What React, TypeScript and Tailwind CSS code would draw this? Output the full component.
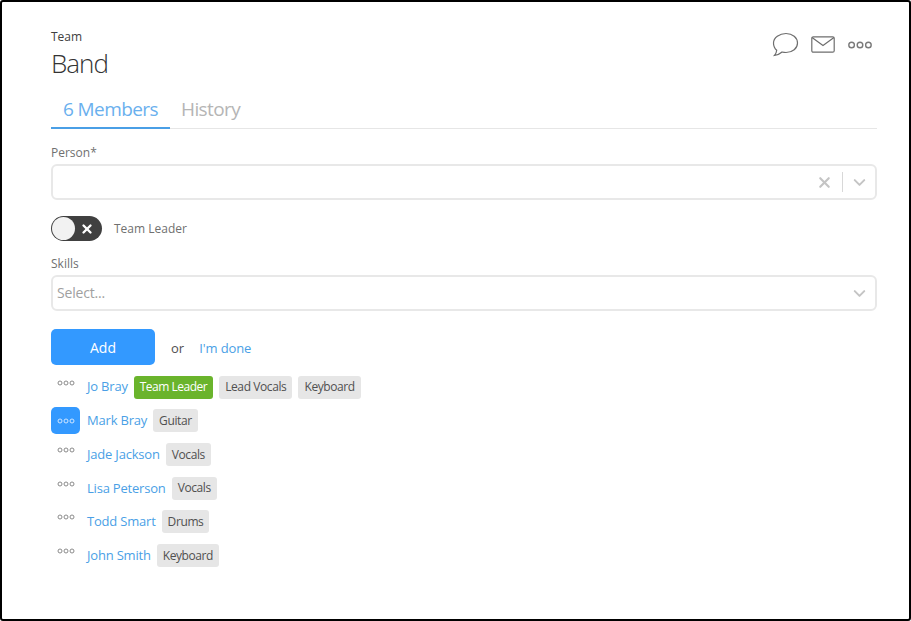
import { X, ChevronDown } from "lucide-react";

const MEMBERS = [
  { name: "Jo Bray", leader: true, skills: ["Lead Vocals", "Keyboard"] },
  { name: "Mark Bray", active: true, skills: ["Guitar"] },
  { name: "Jade Jackson", skills: ["Vocals"] },
  { name: "Lisa Peterson", skills: ["Vocals"] },
  { name: "Todd Smart", skills: ["Drums"] },
  { name: "John Smith", skills: ["Keyboard"] },
];

function Dots({ className }: { className: string }) {
  return (
    <svg width="18" height="6" viewBox="0 0 18 6" fill="none" stroke="currentColor" strokeWidth="1" className={className}>
      <circle cx="3" cy="3" r="2" />
      <circle cx="9" cy="3" r="2" />
      <circle cx="15" cy="3" r="2" />
    </svg>
  );
}

function MemberRow({ member }: { member: (typeof MEMBERS)[number] }) {
  return (
    <div className="flex h-[33.7px] items-center">
      <div className={`mr-[7px] flex h-[27px] w-[29px] justify-center rounded-[5px] ${member.active ? "items-center bg-[#3399ff]" : "bg-white pt-[6px]"}`}>
        <Dots className={member.active ? "text-[#cfe6ff]" : "text-[#8a8a8a]"} />
      </div>
      <span className="mr-[6px] text-[13px] tracking-[-0.2px] text-[#4a9fe6]">{member.name}</span>
      {member.leader && (
        <span className="mr-[6px] flex h-[23px] items-center rounded-[3px] bg-[#6ab42c] px-[6px] text-[12px] tracking-[-0.5px] text-white">Team Leader</span>
      )}
      {member.skills.map((skill) => (
        <span key={skill} className="mr-[6px] flex h-[23px] items-center rounded-[3px] bg-[#e6e6e6] px-[6px] text-[12px] tracking-[-0.4px] text-[#505050]">
          {skill}
        </span>
      ))}
    </div>
  );
}

export default function App() {
  return (
    <div className="h-[621px] w-[911px] overflow-hidden rounded-[3px] border-2 border-black bg-white font-['Open_Sans',sans-serif]">
      <div className="pl-[49px] pr-[32px] pt-[27px]">
        {/* header */}
        <div className="flex items-start justify-between">
          <div>
            <div className="text-[12px] leading-[16px] text-[#404040]">Team</div>
            <div className="mt-[1px] text-[26px] font-light leading-[34px] tracking-[-1px] text-[#333]">Band</div>
          </div>
          <div className="mr-[8px] mt-[3px] flex items-center text-[#6e6e6e]">
            <svg width="27" height="25" viewBox="0 0 27 25" fill="none" stroke="currentColor" strokeWidth="1.2">
              <path d="M14 1.5c6.500 0 11.500 4 11.500 9.500 0 5.500-5 9.500-11.500 9.500-1.400 0-2.700-.2-3.900-.5C8.500 21.500 6 22.800 2.500 23.300c1.300-1.300 2-3 2.200-5C2.600 16.500 1.500 14 1.500 11 1.500 5.500 7.500 1.500 14 1.500z" />
            </svg>
            <svg width="24" height="17" viewBox="0 0 24 17" fill="none" stroke="currentColor" strokeWidth="1.2" className="ml-[12px]">
              <rect x="0.8" y="0.8" width="22.400" height="15.400" rx="1.500" />
              <path d="M1 1.500l11 8 11-8" />
            </svg>
            <Dots className="ml-[16px] scale-x-[1.4] scale-y-[1.4] text-[#7a7a7a]" />
          </div>
        </div>

        {/* tabs */}
        <div className="mt-[12px] flex h-[37px] border-b border-[#e6e6e6] text-[19px] leading-[34px] tracking-[-0.6px]">
          <div className="h-[37px] w-[119px] border-b-2 border-[#4a9fe6] pl-[12px] text-[#6ab0ee]">6 Members</div>
          <div className="pl-[11px] text-[#b5b5b5]">History</div>
        </div>

        {/* person */}
        <div className="mt-[15px] text-[12px] leading-[17px] text-[#707070]">Person*</div>
        <div className="mt-[3px] flex h-[36px] items-center justify-end rounded-[6px] border-2 border-[#e8e8e8]">
          <X size={17} strokeWidth={3} className="text-[#c4c4c4]" />
          <div className="ml-[9px] mr-[7px] h-[20px] w-px bg-[#d8d8d8]" />
          <ChevronDown size={19} strokeWidth={2.5} className="mr-[6px] text-[#c4c4c4]" />
        </div>

        {/* toggle */}
        <div className="mt-[16px] flex h-[25px] items-center">
          <div className="flex h-[25px] w-[51px] items-center rounded-full bg-[#404040] pl-px">
            <div className="h-[23px] w-[23px] rounded-full bg-[#f2f2f2]" />
            <X size={14} strokeWidth={4} className="ml-[5px] text-white" />
          </div>
          <span className="ml-[12px] text-[12px] text-[#707070]">Team Leader</span>
        </div>

        {/* skills */}
        <div className="mt-[14px] text-[12px] leading-[17px] text-[#707070]">Skills</div>
        <div className="mt-[3px] flex h-[36px] items-center justify-between rounded-[6px] border-2 border-[#e8e8e8] pl-[4px]">
          <span className="pb-[2px] text-[14px] tracking-[-0.2px] text-[#a0a0a0]">Select...</span>
          <ChevronDown size={19} strokeWidth={2.5} className="mr-[6px] text-[#c4c4c4]" />
        </div>

        {/* actions */}
        <div className="mt-[18px] flex items-center">
          <button className="h-[36px] w-[104px] rounded-[5px] bg-[#3399ff] text-[14px] text-white">Add</button>
          <span className="ml-[16px] pt-[3px] text-[13px] text-[#505050]">or</span>
          <span className="ml-[15px] pt-[3px] text-[13px] tracking-[-0.1px] text-[#4a9fe6]">I'm done</span>
        </div>

        {/* members */}
        <div className="mt-[5.4px]">
          {MEMBERS.map((member) => (
            <MemberRow key={member.name} member={member} />
          ))}
        </div>
      </div>
    </div>
  );
}
